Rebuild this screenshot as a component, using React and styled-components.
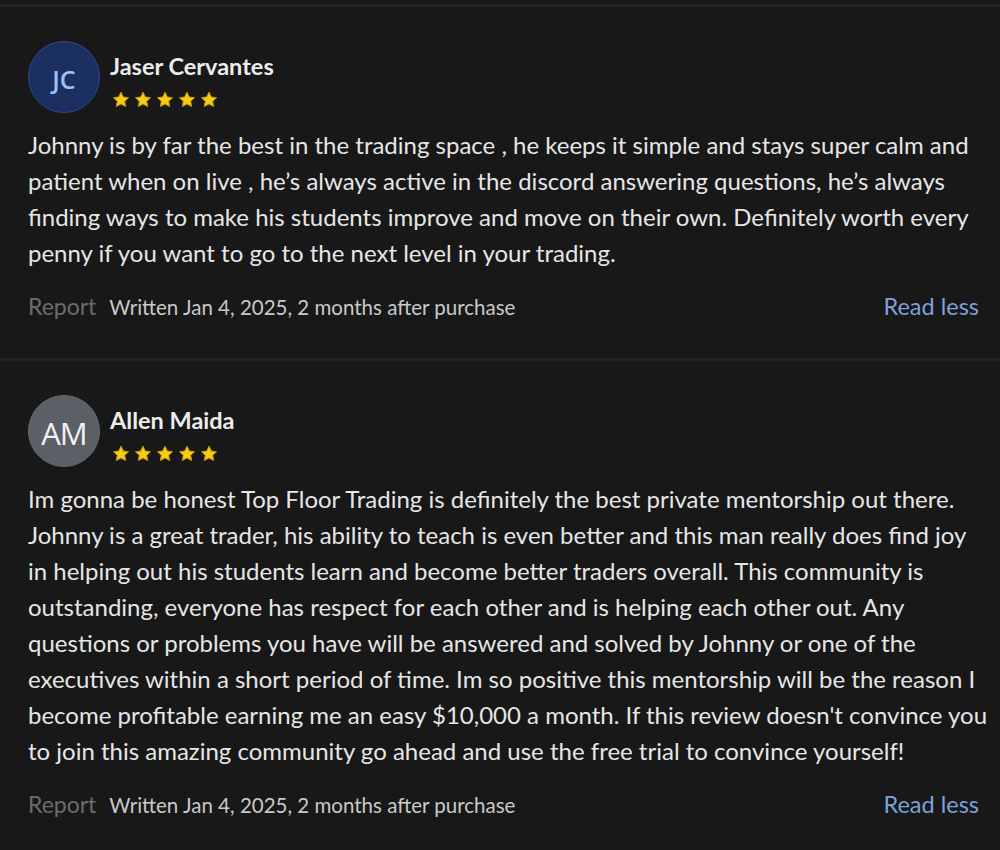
import React from 'react';
import styled, { createGlobalStyle } from 'styled-components';

const reviews = [
  {
    id: 1,
    initials: 'JC',
    name: 'Jaser Cervantes',
    tone: 'blue',
    body: 'Johnny is by far the best in the trading space , he keeps it simple and stays super calm and\npatient when on live , he’s always active in the discord answering questions, he’s always\nfinding ways to make his students improve and move on their own. Definitely worth every\npenny if you want to go to the next level in your trading.',
    written: 'Written Jan 4, 2025, 2 months after purchase',
  },
  {
    id: 2,
    initials: 'AM',
    name: 'Allen Maida',
    tone: 'grey',
    body: "Im gonna be honest Top Floor Trading is definitely the best private mentorship out there.\nJohnny is a great trader, his ability to teach is even better and this man really does find joy\nin helping out his students learn and become better traders overall. This community is\noutstanding, everyone has respect for each other and is helping each other out. Any\nquestions or problems you have will be answered and solved by Johnny or one of the\nexecutives within a short period of time. Im so positive this mentorship will be the reason I\nbecome profitable earning me an easy $10,000 a month. If this review doesn't convince you\nto join this amazing community go ahead and use the free trial to convince yourself!",
    written: 'Written Jan 4, 2025, 2 months after purchase',
  },
];

const Star = () => (
  <svg width="18" height="17" viewBox="0 0 24 23">
    <path
      d="M12 1.5l3.1 6.6 7.2.9-5.3 5 1.4 7.1L12 17.6l-6.4 3.5L7 14l-5.3-5 7.2-.9z"
      fill="#f7cc14"
      stroke="#c79a00"
      strokeWidth="1.2"
      strokeLinejoin="round"
    />
  </svg>
);

const App = () => {
  return (
    <>
      <GlobalStyle />
      <List>
        {reviews.map((r) => (
          <Review key={r.id}>
            <Header>
              <Avatar $tone={r.tone}>{r.initials}</Avatar>
              <Meta>
                <Name>{r.name}</Name>
                <Stars>
                  {[0, 1, 2, 3, 4].map((i) => (
                    <Star key={i} />
                  ))}
                </Stars>
              </Meta>
            </Header>
            <Body>{r.body}</Body>
            <Footer>
              <FooterLeft>
                <Report>Report</Report>
                <Written>{r.written}</Written>
              </FooterLeft>
              <ReadLess>Read less</ReadLess>
            </Footer>
          </Review>
        ))}
      </List>
    </>
  );
};

export default App;

const GlobalStyle = createGlobalStyle`
  body {
    margin: 0;
    background: #181818;
    font-family: 'Lato', 'Open Sans', sans-serif;
  }
`;

const List = styled.div`
  padding-top: 4px;
  background: #181818;
  min-height: 846px;
`;

const Review = styled.div`
  border-top: 3px solid #262626;
  padding: 34px 21px 37px 28px;

  & + & {
    border-top: 3px solid #212121;
  }
`;

const Header = styled.div`
  display: flex;
  gap: 12px;
`;

const Avatar = styled.div`
  width: 72px;
  height: 72px;
  box-sizing: border-box;
  border-radius: 50%;
  display: flex;
  align-items: center;
  justify-content: center;
  flex-shrink: 0;
  padding-top: 3px;
  font-family: 'Open Sans', sans-serif;
  background: ${({ $tone }) => ($tone === 'blue' ? '#1b2f60' : '#5b5f66')};
  border: 1px solid ${({ $tone }) => ($tone === 'blue' ? '#2b4a8e' : '#666a71')};
  color: ${({ $tone }) => ($tone === 'blue' ? '#a0bff2' : '#f2f2f2')};
  font-size: ${({ $tone }) => ($tone === 'blue' ? '25px' : '31px')};
  font-weight: ${({ $tone }) => ($tone === 'blue' ? 600 : 400)};
  letter-spacing: ${({ $tone }) => ($tone === 'blue' ? '0' : '-1px')};
`;

const Meta = styled.div`
  display: flex;
  flex-direction: column;
  padding-top: 11px;
`;

const Name = styled.div`
  color: #ececec;
  font-family: 'Lato', sans-serif;
  font-weight: 700;
  font-size: 23.5px;
  line-height: 28px;
  margin-left: -2px;
`;

const Stars = styled.div`
  display: flex;
  gap: 4px;
  margin-top: 11px;
`;

const Body = styled.p`
  margin: 14px -30px 0 0;
  color: #e6e6e6;
  font-family: 'Lato', sans-serif;
  font-size: 24px;
  line-height: 36px;
  white-space: pre-line;
`;

const Footer = styled.div`
  display: flex;
  align-items: center;
  justify-content: space-between;
  margin-top: 20px;
  height: 30px;
`;

const FooterLeft = styled.div`
  display: flex;
  align-items: baseline;
  gap: 13px;
`;

const Report = styled.span`
  color: #6c6c6c;
  font-size: 23px;
`;

const Written = styled.span`
  color: #c9c9c9;
  font-size: 20.5px;
`;

const ReadLess = styled.span`
  color: #7ea1da;
  font-size: 23.5px;
`;
